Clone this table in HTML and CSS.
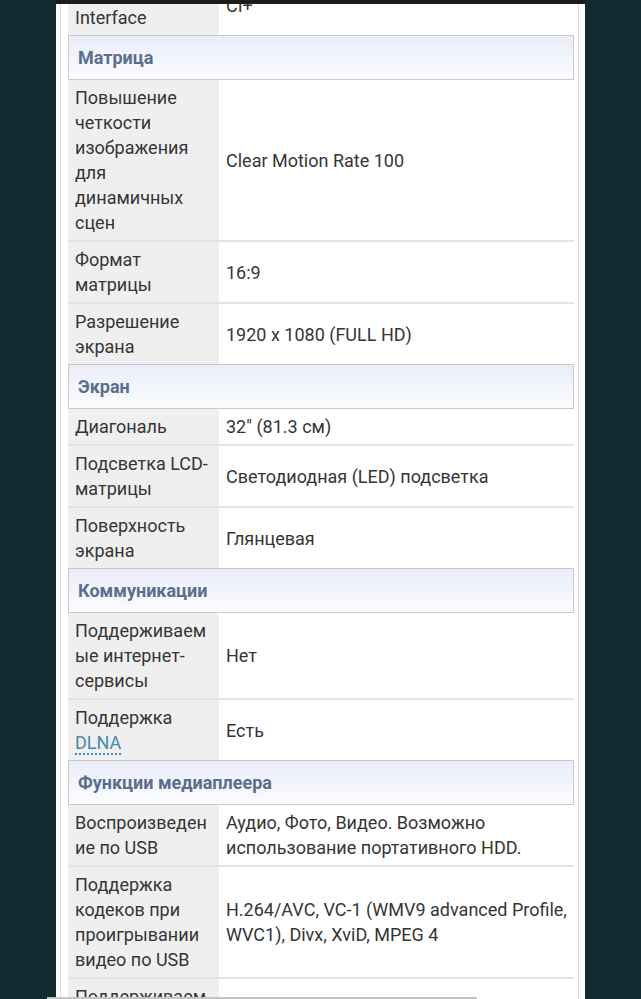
FILE: index.html
```html
<!DOCTYPE html>
<html lang="ru">
<head>
<meta charset="utf-8">
<title>Характеристики</title>
<link rel="stylesheet" href="styles.css">
</head>
<body>
<div class="topbar"></div>
<div class="page">
  <div class="frame">
    <div class="specs">
      <div class="row"><div class="label">Common Interface</div><div class="value">CI+</div></div>

      <div class="section">Матрица</div>
      <div class="row"><div class="label">Повышение четкости изображения для динамичных сцен</div><div class="value">Clear Motion Rate 100</div></div>
      <div class="row sep"><div class="label">Формат матрицы</div><div class="value">16:9</div></div>
      <div class="row sep"><div class="label">Разрешение экрана</div><div class="value">1920 x 1080 (FULL HD)</div></div>

      <div class="section">Экран</div>
      <div class="row"><div class="label">Диагональ</div><div class="value">32" (81.3 см)</div></div>
      <div class="row sep"><div class="label">Подсветка LCD-матрицы</div><div class="value">Светодиодная (LED) подсветка</div></div>
      <div class="row sep"><div class="label">Поверхность экрана</div><div class="value">Глянцевая</div></div>

      <div class="section">Коммуникации</div>
      <div class="row"><div class="label">Поддерживаемые интернет-сервисы</div><div class="value">Нет</div></div>
      <div class="row sep"><div class="label">Поддержка <span class="term">DLNA</span></div><div class="value">Есть</div></div>

      <div class="section">Функции медиаплеера</div>
      <div class="row"><div class="label">Воспроизведение по USB</div><div class="value">Аудио, Фото, Видео. Возможно использование портативного HDD.</div></div>
      <div class="row sep"><div class="label">Поддержка кодеков при проигрывании видео по USB</div><div class="value">H.264/AVC, VC-1 (WMV9 advanced Profile, WVC1), Divx, XviD, MPEG 4</div></div>
      <div class="row sep"><div class="label">Поддерживаемые форматы</div><div class="value"></div></div>
    </div>
  </div>
</div>
<div class="scrollbar"></div>
</body>
</html>
```

FILE: styles.css
```css
html, body {
  margin: 0;
  padding: 0;
}
body {
  background: #112a30;
  height: 999px;
  overflow: hidden;
  position: relative;
  font-family: Roboto, "Noto Sans", "Liberation Sans", sans-serif;
  color: #353535;
}
.topbar {
  position: absolute;
  top: 0;
  left: 56px;
  width: 529px;
  height: 4px;
  background: #1b1b1b;
  z-index: 2;
}
.page {
  width: 529px;
  margin-left: 56px;
  background: #fff;
  padding: 0 6px 0 4px;
  box-sizing: border-box;
  height: 999px;
  overflow: hidden;
}
.frame {
  border-left: 1px solid #dcdcdc;
  border-right: 1px solid #dcdcdc;
  padding: 0 4px 0 7px;
  height: 100%;
  display: flow-root;
}
.specs {
  margin-top: -25px;
}
.row {
  display: grid;
  grid-template-columns: 151px 1fr;
}
.row.sep {
  border-top: 2px solid #e4e4e4;
}
.label {
  background: #efefef;
  padding: 5px 6px 5px 7px;
  font-size: 18px;
  line-height: 25px;
  overflow-wrap: anywhere;
}
.value {
  padding: 5px 7px;
  font-size: 18px;
  line-height: 25px;
  display: flex;
  align-items: center;
}
.term {
  color: #4a88ad;
  border-bottom: 2px dotted #4a88ad;
}
.section {
  height: 45px;
  box-sizing: border-box;
  border: 1px solid #c9c9c9;
  background: linear-gradient(#eaedf9, #fbfcff);
  color: #5b6e8d;
  font-weight: bold;
  font-size: 18px;
  padding-left: 9px;
  display: flex;
  align-items: center;
}
.scrollbar {
  position: absolute;
  left: 47px;
  bottom: 0;
  width: 430px;
  height: 2px;
  background: #c4c4c4;
}
```
